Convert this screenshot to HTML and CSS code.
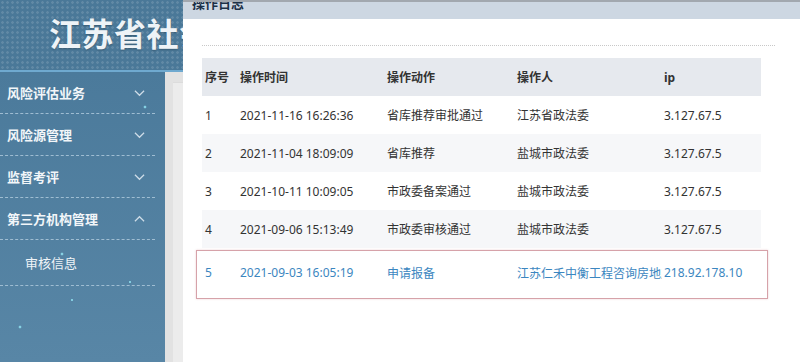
FILE: index.html
```html
<!DOCTYPE html>
<html lang="zh-CN">
<head>
  <meta charset="UTF-8">
  <meta name="viewport" content="width=device-width, initial-scale=1">
  <title>操作日志</title>
  <link rel="stylesheet" href="styles.css">
</head>
<body>
  <div class="header">
    <div class="site-title">江苏省社会稳定风险评估</div>
  </div>

  <div class="layout">
    <div class="sidebar">
      <div class="menu-item">风险评估业务
        <svg class="chev" viewBox="0 0 12 8"><path d="M1 1.5 L6 6.5 L11 1.5" /></svg>
      </div>
      <div class="menu-item">风险源管理
        <svg class="chev" viewBox="0 0 12 8"><path d="M1 1.5 L6 6.5 L11 1.5" /></svg>
      </div>
      <div class="menu-item">监督考评
        <svg class="chev" viewBox="0 0 12 8"><path d="M1 1.5 L6 6.5 L11 1.5" /></svg>
      </div>
      <div class="menu-item">第三方机构管理
        <svg class="chev" viewBox="0 0 12 8"><path d="M1 6.5 L6 1.5 L11 6.5" /></svg>
      </div>
      <div class="menu-sub">审核信息</div>
    </div>
    <div class="main">
      <div class="main-inner"></div>
    </div>
  </div>

  <!-- operation log dialog -->
  <div class="modal">
    <div class="modal-title"><span>操作日志</span></div>
    <div class="modal-body">
      <div class="divider"></div>
      <div class="log-table">
        <div class="row head">
          <div>序号</div><div>操作时间</div><div>操作动作</div><div>操作人</div><div>ip</div>
        </div>
        <div class="row">
          <div>1</div><div>2021-11-16 16:26:36</div><div>省库推荐审批通过</div><div>江苏省政法委</div><div>3.127.67.5</div>
        </div>
        <div class="row alt">
          <div>2</div><div>2021-11-04 18:09:09</div><div>省库推荐</div><div>盐城市政法委</div><div>3.127.67.5</div>
        </div>
        <div class="row">
          <div>3</div><div>2021-10-11 10:09:05</div><div>市政委备案通过</div><div>盐城市政法委</div><div>3.127.67.5</div>
        </div>
        <div class="row alt">
          <div>4</div><div>2021-09-06 15:13:49</div><div>市政委审核通过</div><div>盐城市政法委</div><div>3.127.67.5</div>
        </div>
        <div class="row active">
          <div>5</div><div>2021-09-03 16:05:19</div><div>申请报备</div><div class="clip">江苏仁禾中衡工程咨询房地产</div><div>218.92.178.10</div>
        </div>
      </div>
    </div>
  </div>
</body>
</html>
```

FILE: styles.css
```css
body {
  margin: 0;
  width: 800px;
  height: 362px;
  overflow: hidden;
  position: relative;
  font-family: "Noto Sans", "Noto Sans CJK SC", sans-serif;
  font-size: 12px;
  color: #333;
  background: #e6e6e6;
}
.header {
  height: 70px;
  border-bottom: 2px solid #6fa9cf;
  background-color: #4a7898;
  background-image: radial-gradient(rgba(255, 255, 255, 0.13) 1px, transparent 1.6px);
  background-size: 5px 5px;
  overflow: hidden;
}
.site-title {
  padding: 13px 0 0 49px;
  font-size: 32px;
  line-height: 42px;
  font-weight: bold;
  color: #eef3f7;
  white-space: nowrap;
  letter-spacing: 0.5px;
  text-shadow: 0 1px 2px rgba(0, 0, 0, 0.25);
}
.layout {
  display: flex;
  height: 290px;
}
.sidebar {
  width: 165px;
  background:
    radial-gradient(circle at 20px 255px, #8fe0f0 0.5px, transparent 1.8px),
    radial-gradient(circle at 62px 182px, #8fe0f0 0.5px, transparent 1.8px),
    radial-gradient(circle at 145px 35px, #8fe0f0 0.5px, transparent 1.8px),
    radial-gradient(circle at 72px 228px, #8fe0f0 0.5px, transparent 1.5px),
    radial-gradient(circle at 130px 210px, #8fe0f0 0.5px, transparent 1.5px),
    linear-gradient(#4b7a9b, #5886a6);
}
.menu-item {
  height: 41px;
  margin-right: 10px;
  border-bottom: 1px dashed #9fbdd2;
  display: flex;
  align-items: center;
  justify-content: space-between;
  padding: 0 10px 0 7px;
  color: #f2f6f9;
  font-size: 13px;
  font-weight: bold;
}
.chev {
  width: 11px;
  height: 8px;
  fill: none;
  stroke: #cfdde8;
  stroke-width: 1.3;
}
.menu-sub {
  height: 45px;
  margin-right: 10px;
  border-bottom: 1px dashed #9fbdd2;
  display: flex;
  align-items: center;
  padding-left: 25px;
  color: #eef3f7;
  font-size: 13px;
}
.main {
  flex: 1;
  background: #e2e2e2;
  padding: 10px 0 0 8px;
}
.main-inner {
  height: 100%;
  background: #ececec;
  border-top: 1px solid #dcdcdc;
}
.modal {
  position: absolute;
  left: 183px;
  top: 0;
  right: 0;
  bottom: 0;
  background: #fff;
  border-top: 2px solid #a2a8af;
}
.modal-title {
  height: 17px;
  background: #cdd7e2;
  overflow: hidden;
  padding-left: 9px;
}
.modal-title span {
  display: block;
  margin-top: -6px;
  font-size: 13px;
  line-height: 14px;
  font-weight: bold;
  color: #1c3047;
}
.modal-body {
  padding: 26px 25px 0 19px;
}
.divider {
  border-top: 1px dotted #c8c8c8;
}
.log-table {
  margin: 12px 14px 0 0;
}
.row {
  display: grid;
  grid-template-columns: 35px 147px 130px 147px 1fr;
  align-items: center;
  height: 38px;
  padding-left: 3px;
}
.row.head {
  background: #e6e9ee;
  font-weight: bold;
  color: #333;
}
.row.alt {
  background: #f6f7f9;
}
.row.active {
  height: 43px;
  margin: 2px -7px 0 -6px;
  padding: 0 7px 4px 8px;
  border: 1px solid #d6a2a9;
  box-shadow: 0 0 2px rgba(200, 120, 130, 0.35);
  color: #3b86c0;
}
.clip {
  overflow: hidden;
  white-space: nowrap;
  margin-right: 2px;
}
```
